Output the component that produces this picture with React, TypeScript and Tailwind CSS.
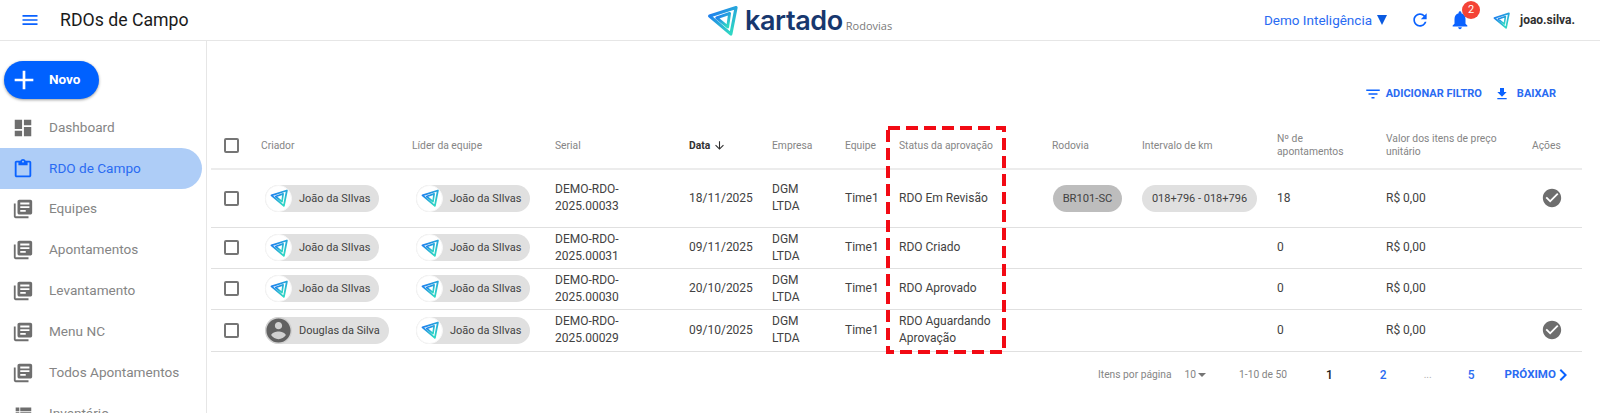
import React from 'react';

const paths = {
    menu: 'M3 18h18v-2H3v2zm0-5h18v-2H3v2zm0-7v2h18V6H3z',
    dashboard: 'M3 13h8V3H3v10zm0 8h8v-6H3v6zm10 0h8V11h-8v10zm0-18v6h8V3h-8z',
    assignment: 'M19 3h-4.18C14.4 1.84 13.3 1 12 1s-2.4.84-2.82 2H5c-1.1 0-2 .9-2 2v14c0 1.1.9 2 2 2h14c1.1 0 2-.9 2-2V5c0-1.1-.9-2-2-2zm-7 0c.55 0 1 .45 1 1s-.45 1-1 1-1-.45-1-1 .45-1 1-1zm7 16H5V5h2v3h10V5h2v14z',
    books: 'M4 6H2v14c0 1.1.9 2 2 2h14v-2H4V6zm16-4H8c-1.1 0-2 .9-2 2v12c0 1.1.9 2 2 2h12c1.1 0 2-.9 2-2V4c0-1.1-.9-2-2-2zm-1 9H9V9h10v2zm-4 4H9v-2h6v2zm4-8H9V5h10v2z',
    list: 'M4 14h4v-4H4v4zm0 5h4v-4H4v4zM4 9h4V5H4v4zm5 5h12v-4H9v4zm0 5h12v-4H9v4zM9 5v4h12V5H9z',
    refresh: 'M17.65 6.35C16.2 4.9 14.21 4 12 4c-4.42 0-7.99 3.58-7.99 8s3.57 8 7.99 8c3.73 0 6.84-2.55 7.73-6h-2.08c-.82 2.33-3.04 4-5.65 4-3.31 0-6-2.69-6-6s2.69-6 6-6c1.66 0 3.14.69 4.22 1.78L13 11h7V4l-2.35 2.35z',
    bell: 'M12 22c1.1 0 2-.9 2-2h-4c0 1.1.89 2 2 2zm6-6v-5c0-3.07-1.64-5.64-4.5-6.32V4c0-.83-.67-1.5-1.5-1.5s-1.5.67-1.5 1.5v.68C7.63 5.36 6 7.92 6 11v5l-2 2v1h16v-1l-2-2z',
    filter: 'M10 18h4v-2h-4v2zM3 6v2h18V6H3zm3 7h12v-2H6v2z',
    download: 'M19 9h-4V3H9v6H5l7 7 7-7zM5 18v2h14v-2H5z',
    check: 'M12 2C6.48 2 2 6.48 2 12s4.48 10 10 10 10-4.48 10-10S17.52 2 12 2zm-2 15l-5-5 1.41-1.41L10 14.17l7.59-7.59L19 8l-9 9z',
    account: 'M12 2C6.48 2 2 6.48 2 12s4.48 10 10 10 10-4.48 10-10S17.52 2 12 2zm0 3c1.66 0 3 1.34 3 3s-1.34 3-3 3-3-1.34-3-3 1.34-3 3-3zm0 14.2c-2.5 0-4.71-1.28-6-3.22.03-1.99 4-3.08 6-3.08 1.99 0 5.97 1.09 6 3.08-1.29 1.94-3.5 3.22-6 3.22z',
    arrowDown: 'M20 12l-1.41-1.41L13 16.17V4h-2v12.17l-5.58-5.59L4 12l8 8 8-8z',
    chevron: 'M10 6L8.59 7.41 13.17 12l-4.58 4.59L10 18l6-6z',
    add: 'M19 13h-6v6h-2v-6H5v-2h6V5h2v6h6v2z',
};

const Icon: React.FC<{ d: string; className: string }> = ({ d, className }) => (
    <svg viewBox="0 0 24 24" fill="currentColor" className={className}>
        <path d={d} />
    </svg>
);

// Kartado triangle mark
const Mark: React.FC<{ className: string; id: string }> = ({ className, id }) => (
    <svg viewBox="0 0 24 24" fill="none" className={className}>
        <defs>
            <linearGradient id={id} x1="0" y1="0.2" x2="0.7" y2="1">
                <stop offset="0" stopColor="#1d7bf0" />
                <stop offset="1" stopColor="#2fd6c4" />
            </linearGradient>
        </defs>
        <path d="M2 8.5 22.5 2 18.5 22.5Z" stroke={`url(#${id})`} strokeWidth="2.4" strokeLinejoin="round" />
        <path d="M7.5 10 17.5 6.5 16 17Z" stroke={`url(#${id})`} strokeWidth="2.2" strokeLinejoin="round" />
    </svg>
);

const Chip: React.FC<{ name: string; id: string; person?: boolean }> = ({ name, id, person }) => (
    <div className={`h-[27px] ml-[4px] align-middle inline-flex items-center rounded-full bg-[#e0e0e0] text-[11px] text-[#424242] ${person ? 'w-[124px]' : 'w-[114px]'}`}>
        {person ? (
            <span className="w-[27px] h-[27px] rounded-full bg-[#d0d0d0] flex items-center justify-center shrink-0">
                <Icon d={paths.account} className="w-[29px] h-[29px] text-[#616161] shrink-0" />
            </span>
        ) : (
            <span className="w-[27px] h-[27px] rounded-full bg-white border border-[#f7f7f7] flex items-center justify-center shrink-0">
                <Mark id={id} className="w-[18px] h-[18px]" />
            </span>
        )}
        <span className="ml-[7px] whitespace-nowrap">{name}</span>
    </div>
);

const menu = [
    { label: 'Dashboard', icon: paths.dashboard },
    { label: 'RDO de Campo', icon: paths.assignment, active: true },
    { label: 'Equipes', icon: paths.books },
    { label: 'Apontamentos', icon: paths.books },
    { label: 'Levantamento', icon: paths.books },
    { label: 'Menu NC', icon: paths.books },
    { label: 'Todos Apontamentos', icon: paths.books },
    { label: 'Inventário', icon: paths.list },
];

const rows = [
    { h: 'h-[58px]', creator: 'João da SIlvas', serial: 'DEMO-RDO-2025.00033', date: '18/11/2025', status: 'RDO Em Revisão', road: 'BR101-SC', km: '018+796 - 018+796', count: '18', ok: true },
    { h: 'h-[41px]', creator: 'João da SIlvas', serial: 'DEMO-RDO-2025.00031', date: '09/11/2025', status: 'RDO Criado', count: '0' },
    { h: 'h-[41px]', creator: 'João da SIlvas', serial: 'DEMO-RDO-2025.00030', date: '20/10/2025', status: 'RDO Aprovado', count: '0' },
    { h: 'h-[42px]', creator: 'Douglas da Silva', person: true, serial: 'DEMO-RDO-2025.00029', date: '09/10/2025', status: 'RDO Aguardando Aprovação', count: '0', ok: true },
];

const App: React.FC = () => {
    return (
        <div className="h-[413px] w-[1600px] overflow-hidden bg-white font-['Roboto',sans-serif] flex flex-col">
            {/* Top bar */}
            <header className="h-[41px] shrink-0 border-b border-[#e6e6e6] flex items-center">
                <div className="w-[707px] shrink-0 flex items-center">
                    <Icon d={paths.menu} className="w-[20px] h-[20px] ml-[20px] text-[#0a62ff]" />
                    <h1 className="ml-[20px] text-[17.7px] text-[#1a1a1a]">RDOs de Campo</h1>
                </div>
                <div className="flex items-center">
                    <Mark id="logo-top" className="w-[31px] h-[31px]" />
                    <span className="ml-[7px] font-['Inter',sans-serif] font-semibold text-[27px] leading-none text-[#17376e] tracking-[-0.4px]">kartado</span>
                    <span className="ml-[3px] mt-[13px] font-['Open_Sans',sans-serif] text-[11px] text-[#7a7a7a]">Rodovias</span>
                </div>
                <div className="ml-auto flex items-center pr-[25px] relative">
                    <span className="text-[13.5px] text-[#2a6bf2]">Demo Inteligência</span>
                    <span className="ml-[5px] w-0 h-0 border-l-[5px] border-r-[5px] border-t-[10px] border-l-transparent border-r-transparent border-t-[#0a5ae0]" />
                    <Icon d={paths.refresh} className="ml-[23px] w-[20px] h-[20px] text-[#0a62ff]" />
                    <span className="relative ml-[19px]">
                        <Icon d={paths.bell} className="w-[22px] h-[22px] text-[#0a62ff]" />
                        <span className="absolute -top-[8px] left-[13px] w-[18px] h-[18px] rounded-full bg-[#f44336] text-white text-[11px] flex items-center justify-center">2</span>
                    </span>
                    <Mark id="logo-user" className="ml-[22px] w-[17px] h-[17px]" />
                    <span className="ml-[10px] text-[12px] font-bold text-[#303030]">joao.silva.</span>
                </div>
            </header>

            <div className="flex flex-1 min-h-0">
                {/* Sidebar */}
                <aside className="w-[207px] shrink-0 border-r border-[#e6e6e6] pt-[20px]">
                    <button className="ml-[4px] w-[95px] h-[38px] pb-[1px] rounded-full bg-[#0061ff] shadow-[0_1px_3px_rgba(0,0,0,0.4)] flex items-center text-white">
                        <Icon d={paths.add} className="ml-[4px] w-[32px] h-[32px] shrink-0" />
                        <span className="ml-[9px] text-[13.5px] font-bold">Novo</span>
                    </button>
                    <nav className="mt-[8px]">
                        {menu.map(item => (
                            <div
                                key={item.label}
                                className={`h-[41px] w-[202px] flex items-center rounded-r-full ${item.active ? 'bg-[#aecdf7] text-[#2a6bf2] -mb-px' : 'text-[#858585]'}`}
                            >
                                <Icon d={item.icon} className={`ml-[12px] w-[22px] h-[22px] shrink-0 ${item.active ? 'text-[#0a62ff]' : 'text-[#6e6e6e]'}`} />
                                <span className="ml-[15px] text-[13.6px] whitespace-nowrap">{item.label}</span>
                            </div>
                        ))}
                    </nav>
                </aside>

                {/* Content */}
                <main className="flex-1 min-w-0 pl-[4px] pr-[18px] pt-[41px] relative">
                    <div className="h-[24px] flex items-center justify-end pr-[26px] text-[11px] font-bold text-[#2a6bf2]">
                        <Icon d={paths.filter} className="w-[18px] h-[18px] text-[#0a62ff]" />
                        <span className="ml-[4px]">ADICIONAR FILTRO</span>
                        <Icon d={paths.download} className="ml-[12px] w-[16px] h-[16px] text-[#0a62ff]" />
                        <span className="ml-[7px]">BAIXAR</span>
                    </div>

                    <table className="mt-[16px] w-[1371px] table-fixed border-collapse text-[12px] text-[#424242]">
                        <colgroup>
                            <col className="w-[50px]" />
                            <col className="w-[151px]" />
                            <col className="w-[143px]" />
                            <col className="w-[134px]" />
                            <col className="w-[83px]" />
                            <col className="w-[73px]" />
                            <col className="w-[54px]" />
                            <col className="w-[153px]" />
                            <col className="w-[90px]" />
                            <col className="w-[135px]" />
                            <col className="w-[109px]" />
                            <col className="w-[146px]" />
                            <col />
                        </colgroup>
                        <thead>
                            <tr className="h-[47px] border-b-2 border-[#ececec] text-[10.3px] leading-[13px] text-[#858585] text-left">
                                <th className="font-normal"><span className="ml-[13px] block w-[15px] h-[15px] border-2 border-[#757575] rounded-[2px]" /></th>
                                <th className="font-normal">Criador</th>
                                <th className="font-normal">Líder da equipe</th>
                                <th className="font-normal">Serial</th>
                                <th className="font-bold text-[#303030]">
                                    <span className="inline-flex items-center">Data<Icon d={paths.arrowDown} className="ml-[3px] w-[13px] h-[13px]" /></span>
                                </th>
                                <th className="font-normal">Empresa</th>
                                <th className="font-normal">Equipe</th>
                                <th className="font-normal whitespace-nowrap">Status da aprovação</th>
                                <th className="font-normal">Rodovia</th>
                                <th className="font-normal">Intervalo de km</th>
                                <th className="font-normal">Nº de<br />apontamentos</th>
                                <th className="font-normal">Valor dos itens de preço<br />unitário</th>
                                <th className="font-normal">Ações</th>
                            </tr>
                        </thead>
                        <tbody className="leading-[17px]">
                            {rows.map((r, i) => (
                                <tr key={r.serial} className={`${r.h} border-b border-[#e0e0e0]`}>
                                    <td><span className="ml-[13px] block w-[15px] h-[15px] border-2 border-[#757575] rounded-[2px]" /></td>
                                    <td><Chip id={`creator-${i}`} name={r.creator} person={r.person} /></td>
                                    <td><Chip id={`lead-${i}`} name="João da SIlvas" /></td>
                                    <td>{r.serial.slice(0, 9)}<br />{r.serial.slice(9)}</td>
                                    <td>{r.date}</td>
                                    <td>DGM<br />LTDA</td>
                                    <td>Time1</td>
                                    <td className="pr-[20px]">{r.status}</td>
                                    <td>
                                        {r.road && <span className="ml-[1px] align-middle inline-flex items-center justify-center h-[27px] w-[69px] rounded-full bg-[#bdbdbd] text-[11.2px]">{r.road}</span>}
                                    </td>
                                    <td>
                                        {r.km && <span className="align-middle inline-flex items-center justify-center h-[27px] w-[115px] rounded-full bg-[#e0e0e0] text-[11px] whitespace-nowrap">{r.km}</span>}
                                    </td>
                                    <td>{r.count}</td>
                                    <td>R$ 0,00</td>
                                    <td>{r.ok && <Icon d={paths.check} className="ml-[9px] w-[22px] h-[22px] text-[#6e6e6e]" />}</td>
                                    <td />
                                </tr>
                            ))}
                        </tbody>
                    </table>

                    <div className="h-[46px] flex items-center whitespace-nowrap text-[10.25px] text-[#858585]">
                        <span className="ml-[887px]">Itens por página</span>
                        <span className="ml-[13px]">10</span>
                        <span className="ml-[2px] w-0 h-0 border-l-[4px] border-r-[4px] border-t-[4px] border-l-transparent border-r-transparent border-t-[#757575]" />
                        <span className="ml-[33px]">1-10 de 50</span>
                        <span className="ml-[39px] font-medium text-[12px] text-[#212121]">1</span>
                        <span className="ml-[47px] font-medium text-[12px] text-[#2a6bf2]">2</span>
                        <span className="ml-[37px] text-[#b0b0b0]">...</span>
                        <span className="ml-[36px] font-medium text-[12px] text-[#2a6bf2]">5</span>
                        <span className="ml-[30px] font-bold text-[11.5px] text-[#2a6bf2]">PRÓXIMO</span>
                        <Icon d={paths.chevron} className="-ml-[5px] w-[24px] h-[24px] shrink-0 text-[#0a62ff]" />
                    </div>

                    {/* annotation drawn over the status column */}
                    <svg className="absolute left-[679px] top-[85px] w-[120px] h-[228px]" viewBox="0 0 120 228" fill="none">
                        <rect x="2" y="2" width="116" height="224" stroke="#f20a14" strokeWidth="4" strokeDasharray="12 6" />
                    </svg>
                </main>
            </div>
        </div>
    );
};

export default App;
